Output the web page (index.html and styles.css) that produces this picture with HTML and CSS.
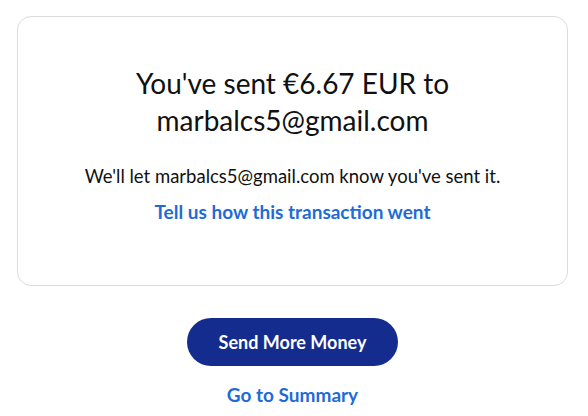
FILE: index.html
```html
<!DOCTYPE html>
<html lang="en">
<head>
    <meta charset="UTF-8">
    <title>Payment sent</title>
    <link rel="stylesheet" href="styles.css">
</head>
<body>

<div class="page">
    <div class="card">
        <h2 class="title">You've sent €6.67 EUR to marbalcs5@gmail.com</h2>
        <p class="note">We'll let marbalcs5@gmail.com know you've sent it.</p>
        <a href="#" class="link">Tell us how this transaction went</a>
    </div>

    <div class="actions">
        <button class="primary">Send More Money</button>
        <a href="#" class="link">Go to Summary</a>
    </div>
</div>

</body>
</html>
```

FILE: styles.css
```css
body {
    font-family: 'Lato', 'Open Sans', sans-serif;
    background-color: #fff;
    margin: 0;
    padding: 0;
    color: #111;
}

.page {
    padding: 16px 20px 0 17px;
}

.card {
    border: 1px solid #dcdcdc;
    border-radius: 14px;
    height: 270px;
    box-sizing: border-box;
    padding: 48px 30px 0;
    text-align: center;
}

.title {
    font-size: 28px;
    font-weight: normal;
    line-height: 37px;
    margin: 0 auto;
    max-width: 360px;
}

.note {
    font-size: 18.5px;
    margin: 26px 0 13px;
    line-height: 22px;
}

.link {
    display: inline-block;
    color: #1f6bd6;
    font-weight: bold;
    font-size: 19px;
    line-height: 23px;
    text-decoration: none;
}

.actions {
    display: flex;
    flex-direction: column;
    align-items: center;
    padding-top: 32px;
    gap: 17px;
}

.primary {
    font-family: inherit;
    background-color: #142c8e;
    color: #fff;
    border: none;
    border-radius: 24px;
    width: 211px;
    height: 48px;
    font-size: 18px;
    font-weight: bold;
    cursor: pointer;
}
```
